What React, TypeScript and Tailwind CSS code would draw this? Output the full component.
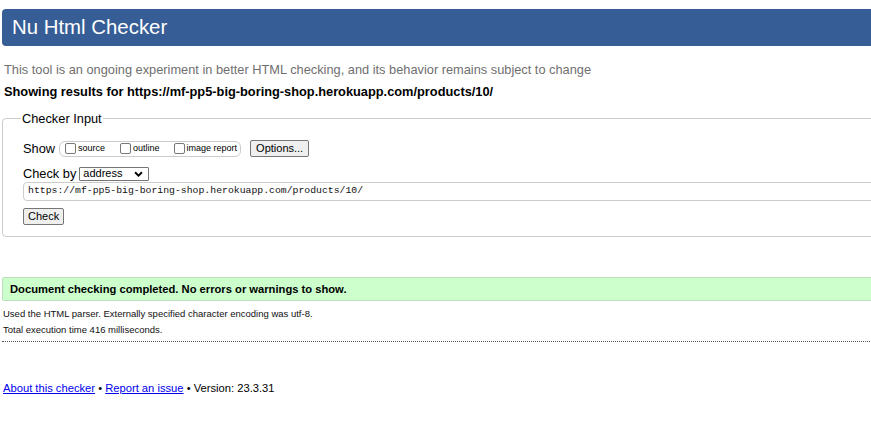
export default function App() {
  return (
    <div className="w-[871px] h-[432px] overflow-hidden bg-white font-['Liberation_Sans',Arial,sans-serif] text-black">
      <div className="w-[960px] pl-[2px]">
        {/* Banner */}
        <div className="mt-[9px] h-[37px] bg-[#365d95] rounded-l-[4px] pl-[10px] flex items-center">
          <h1 className="text-[20.4px] text-white leading-none">Nu Html Checker</h1>
        </div>

        <p className="mt-[16px] ml-[2px] text-[12.8px] leading-[16px] text-[#6f6f6f]">
          This tool is an ongoing experiment in better HTML checking, and its behavior remains subject to change
        </p>
        <p className="mt-[6px] ml-[2px] text-[12.8px] leading-[16px] font-bold">
          Showing results for https://mf-pp5-big-boring-shop.herokuapp.com/products/10/
        </p>

        {/* Checker input */}
        <fieldset className="mt-[11px] border border-[#ccc] rounded-[4px] pl-[20px] pr-2 h-[126px]">
          <legend className="text-[12.8px] leading-[15px] px-[1px] ml-[-2px]">Checker Input</legend>
          <div className="flex items-center h-[17px] mt-[14px]">
            <span className="text-[12.8px] mr-[4px]">Show</span>
            <span className="flex items-center h-[16px] border border-[#ccc] rounded-[6px] pl-[5px] pr-[3px] text-[9px]">
              <label className="flex items-end mr-[15px]">
                <span className="w-[11px] h-[11px] border border-[#777] rounded-[2px] mr-[2px] mb-[1px]" />
                source
              </label>
              <label className="flex items-end mr-[14px]">
                <span className="w-[11px] h-[11px] border border-[#777] rounded-[2px] mr-[2px] mb-[1px]" />
                outline
              </label>
              <label className="flex items-end">
                <span className="w-[11px] h-[11px] border border-[#777] rounded-[2px] mr-[2px] mb-[1px]" />
                image report
              </label>
            </span>
            <button className="ml-[9px] h-[17px] px-[5px] border border-[#767676] bg-[#efefef] rounded-[2px] text-[11px] leading-none">
              Options...
            </button>
          </div>
          <div className="flex items-center mt-[9px] h-[15px]">
            <span className="text-[12.8px] mr-[3px]">Check by</span>
            <span className="flex items-center justify-between w-[70px] h-[14px] border border-[#767676] rounded-[1px] pl-[3px] pr-[5px] text-[11px] leading-none">
              address
              <svg width="9" height="6" viewBox="0 0 10 7">
                <path d="M1 1.5 L5 5.5 L9 1.5" fill="none" stroke="#000" strokeWidth="2.2" />
              </svg>
            </span>
          </div>
          <div className="mt-[1px] h-[19px] border border-[#ccc] rounded-l-[4px] flex items-center pl-[4px] font-['Liberation_Mono',monospace] text-[9.8px] text-[#111]">
            https://mf-pp5-big-boring-shop.herokuapp.com/products/10/
          </div>
          <button className="mt-[7px] h-[17px] px-[4px] border border-[#767676] bg-[#efefef] rounded-[2px] text-[11px] leading-none">
            Check
          </button>
        </fieldset>

        {/* Result */}
        <div className="mt-[40px] h-[24px] border border-[#bbddbb] bg-[#ccffcc] rounded-l-[2px] pl-[7px] flex items-center">
          <span className="text-[11.2px] font-bold">Document checking completed. No errors or warnings to show.</span>
        </div>
        <p className="mt-[7px] ml-[1px] text-[9.5px] leading-[12px] text-[#111]">
          Used the HTML parser. Externally specified character encoding was utf-8.
        </p>
        <p className="mt-[4px] ml-[1px] text-[9.5px] leading-[12px] text-[#111]">
          Total execution time 416 milliseconds.
        </p>
        <div className="mt-[5px] border-t border-dotted border-[#555]" />

        <p className="mt-[39px] ml-[1px] text-[11.2px] leading-[14px]">
          <a className="text-[#00e] underline">About this checker</a> • <a className="text-[#00e] underline">Report an issue</a> • Version: 23.3.31
        </p>
      </div>
    </div>
  );
}
